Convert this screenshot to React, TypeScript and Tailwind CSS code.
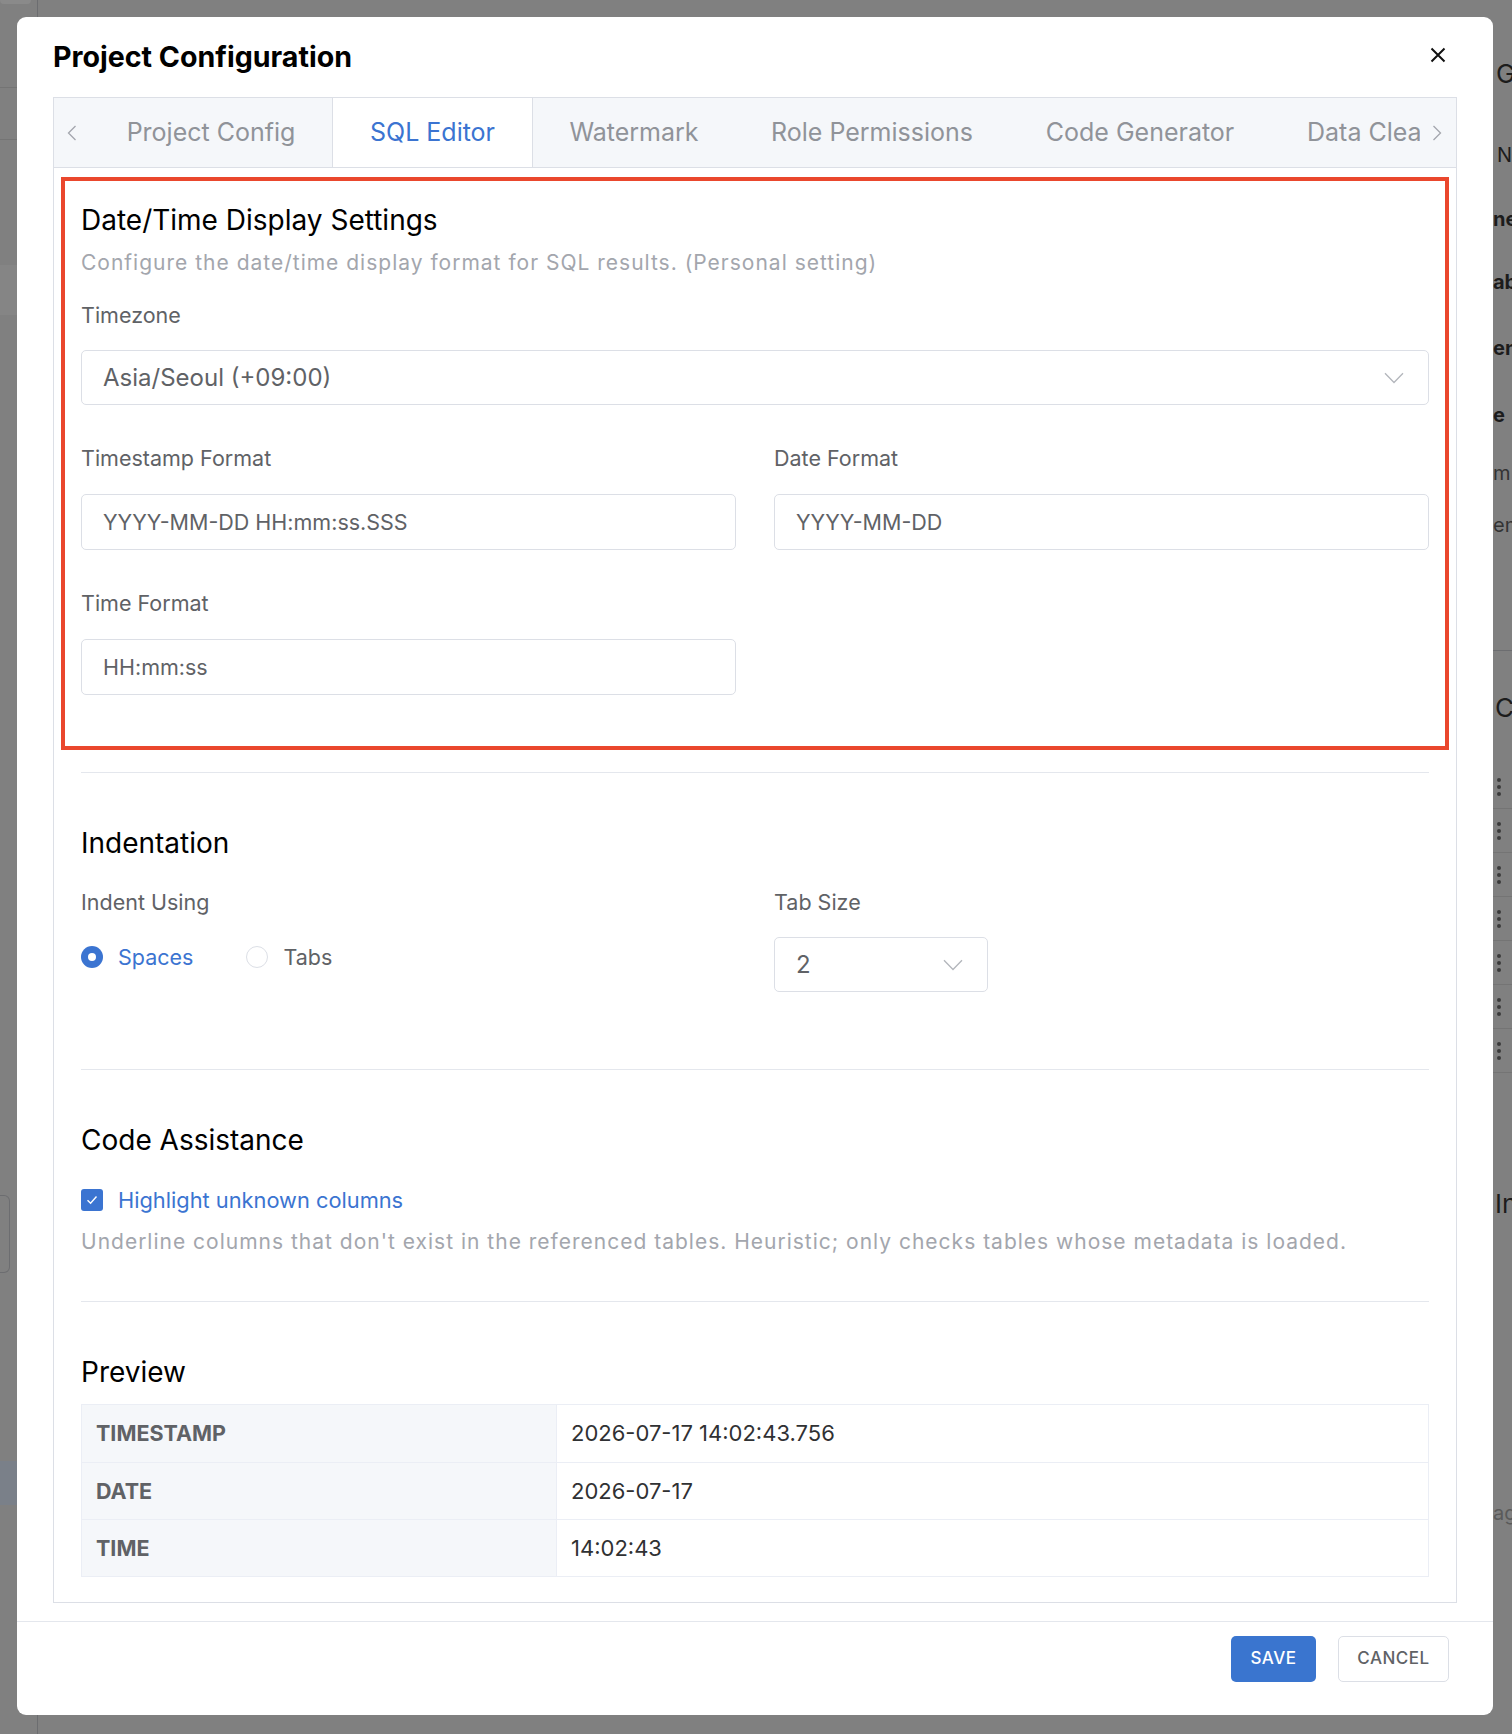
import React from "react";

function ChevronDown() {
  return (
    <svg width="20" height="12" viewBox="0 0 20 12" fill="none">
      <path d="M1 1.2 L10 10.5 L19 1.2" stroke="#b3b6bc" strokeWidth="1.3" />
    </svg>
  );
}

function ChevronLeft() {
  return (
    <svg width="10" height="16" viewBox="0 0 10 16" fill="none">
      <path d="M8.5 1 L1.5 8 L8.5 15" stroke="#a3a6ad" strokeWidth="1.3" />
    </svg>
  );
}

function ChevronRight() {
  return (
    <svg width="10" height="16" viewBox="0 0 10 16" fill="none">
      <path d="M1.5 1 L8.5 8 L1.5 15" stroke="#a3a6ad" strokeWidth="1.3" />
    </svg>
  );
}

function CloseIcon() {
  return (
    <svg width="16" height="16" viewBox="0 0 16 16" fill="none">
      <path d="M1.5 1.5 L14.5 14.5 M14.5 1.5 L1.5 14.5" stroke="#111" strokeWidth="2" />
    </svg>
  );
}

function Label({ children }: { children: React.ReactNode }) {
  return <div className="h-[28px] text-[21.5px] leading-[28px] text-[#606266]">{children}</div>;
}

function TextInput({ value }: { value: string }) {
  return (
    <div className="mt-[22px] flex h-[56px] items-center rounded-[5px] border border-[#dcdfe6] px-[21px] text-[21.5px] text-[#606266]">
      {value}
    </div>
  );
}

function SectionTitle({ children, className = "" }: { children: React.ReactNode; className?: string }) {
  return <h3 className={"h-[32px] text-[28px] leading-[32px] text-black " + className}>{children}</h3>;
}

function Backdrop() {
  return (
    <div className="flex h-full w-full">
      <div className="flex h-full w-[38px] flex-col border-r border-[#6c6d70]">
        <div className="h-[4px] w-[31px] rounded-b-[4px] bg-[#8a8a8a]" />
        <div className="mt-[83px] h-[53px] border-y border-[#747474]" />
        <div className="mt-[125px] h-[50px] bg-[#858585]" />
        <div className="mt-[880px] h-[78px] w-[10px] rounded-r-[6px] border border-l-0 border-[#6c6d70]" />
        <div className="mt-[188px] h-[44px] bg-[#7a8089]" />
      </div>
      <div className="h-full flex-1 bg-[radial-gradient(circle,#6a6a6a_1px,transparent_1.6px)] bg-[length:29.5px_29.5px] bg-[position:3px_12px]" />
      <div className="flex h-full w-[19px] flex-col overflow-hidden whitespace-nowrap text-[#1c1c1c]">
        <div className="h-[56px]" />
        <div className="flex h-[34px] items-center pl-[3px] text-[26px]">G</div>
        <div className="h-[50px]" />
        <div className="flex h-[30px] items-center pl-[4px] text-[20px]">N</div>
        <div className="h-[34px]" />
        <div className="flex h-[30px] items-center text-[20px] font-bold">ne</div>
        <div className="h-[33px]" />
        <div className="flex h-[30px] items-center text-[20px] font-bold">ab</div>
        <div className="h-[36px]" />
        <div className="flex h-[30px] items-center text-[20px] font-bold">en</div>
        <div className="h-[37px]" />
        <div className="flex h-[30px] items-center text-[20px] font-bold">e</div>
        <div className="h-[28px]" />
        <div className="flex h-[30px] items-center text-[20px] text-[#333]">m</div>
        <div className="h-[22px]" />
        <div className="flex h-[30px] items-center text-[20px] text-[#333]">em</div>
        <div className="h-[111px] border-b border-[#6c6d70]" />
        <div className="h-[38px]" />
        <div className="flex h-[36px] items-center pl-[2px] text-[26px]">C</div>
        <div className="h-[40px]" />
        {[0, 1, 2, 3, 4, 5, 6].map((i) => (
          <div key={i} className="flex h-[44px] flex-col items-start justify-center gap-[3px] border-b border-[#747474] pl-[4px]">
            <span className="h-[4px] w-[4px] rounded-full bg-[#3a3a3a]" />
            <span className="h-[4px] w-[4px] rounded-full bg-[#3a3a3a]" />
            <span className="h-[4px] w-[4px] rounded-full bg-[#3a3a3a]" />
          </div>
        ))}
        <div className="h-[114px]" />
        <div className="flex h-[32px] items-center pl-[2px] text-[26px]">In</div>
        <div className="h-[279px]" />
        <div className="flex h-[30px] items-center text-[20px] text-[#5a5a5a]">ag</div>
      </div>
    </div>
  );
}

const tabs = [
  { name: "Project Config", w: "w-[242px]" },
  { name: "SQL Editor", w: "w-[201px]", active: true },
  { name: "Watermark", w: "w-[202px]" },
  { name: "Role Permissions", w: "w-[274px]" },
  { name: "Code Generator", w: "w-[262px]" },
];

export default function App() {
  return (
    <div className="relative h-[1734px] w-full overflow-hidden bg-[#808080] font-['Inter',sans-serif]">
      <Backdrop />

      <div className="absolute left-[17px] top-[17px] flex h-[1698px] w-[1476px] flex-col rounded-[9px] bg-white">
        {/* header */}
        <div className="flex h-[80px] shrink-0 items-center justify-between pl-[36px] pr-[45px]">
          <h2 className="text-[28.6px] font-bold leading-[32px] text-black">Project Configuration</h2>
          <button className="-mt-[4px] flex h-[20px] w-[20px] items-center justify-center">
            <CloseIcon />
          </button>
        </div>

        {/* tabs card */}
        <div className="mx-[36px] flex h-[1506px] shrink-0 flex-col border border-[#dcdfe6]">
          <div className="flex h-[70px] shrink-0 border-b border-[#dcdfe6] bg-[#f5f7fa]">
            <div className="flex w-[36px] shrink-0 items-center justify-center">
              <ChevronLeft />
            </div>
            <div className="flex w-[1330px] shrink-0 overflow-hidden">
              {tabs.map((t) => (
                <div
                  key={t.name}
                  className={
                    "flex h-[70px] shrink-0 items-center justify-center whitespace-nowrap text-[25px] " +
                    t.w +
                    (t.active
                      ? " border-x border-[#dcdfe6] bg-white text-[#3b74d1]"
                      : " text-[#909399]")
                  }
                >
                  {t.name}
                </div>
              ))}
              <div className="flex h-[69px] w-[260px] shrink-0 items-center whitespace-nowrap pl-[36px] text-[25px] text-[#909399]">
                Data Cleaning
              </div>
            </div>
            <div className="flex flex-1 items-center justify-center pr-[2px]">
              <ChevronRight />
            </div>
          </div>

          {/* pane */}
          <div className="flex-1 px-[27px] pt-[9px]">
            <div className="-mx-[20px] border-[4px] border-[#ea472d] px-[16px] pt-[23px] pb-[51px]">
              <SectionTitle>Date/Time Display Settings</SectionTitle>
              <p className="mt-[13px] h-[28px] whitespace-nowrap text-[21px] leading-[28px] tracking-[1px] text-[#a3a6ad]">
                Configure the date/time display format for SQL results. (Personal setting)
              </p>
              <div className="mt-[24px]">
                <Label>Timezone</Label>
                <div className="mt-[21px] flex h-[55px] items-center justify-between rounded-[5px] border border-[#dcdfe6] pl-[21px] pr-[24px] text-[24px] text-[#606266]">
                  <span>Asia/Seoul (+09:00)</span>
                  <ChevronDown />
                </div>
              </div>
              <div className="mt-[39px] grid grid-cols-2 gap-x-[38px]">
                <div>
                  <Label>Timestamp Format</Label>
                  <TextInput value="YYYY-MM-DD HH:mm:ss.SSS" />
                </div>
                <div>
                  <Label>Date Format</Label>
                  <TextInput value="YYYY-MM-DD" />
                </div>
              </div>
              <div className="mt-[39px] grid grid-cols-2 gap-x-[38px]">
                <div>
                  <Label>Time Format</Label>
                  <TextInput value="HH:mm:ss" />
                </div>
              </div>
            </div>

            <div className="mt-[22px] h-px bg-[#e4e7ed]" />

            <SectionTitle className="mt-[54px]">Indentation</SectionTitle>
            <div className="mt-[29px] grid grid-cols-2 gap-x-[38px]">
              <div>
                <Label>Indent Using</Label>
                <div className="mt-[21px] flex h-[40px] items-center">
                  <div className="flex items-center">
                    <span className="flex h-[22px] w-[22px] items-center justify-center rounded-full bg-[#3b74d1]">
                      <span className="h-[8px] w-[8px] rounded-full bg-white" />
                    </span>
                    <span className="ml-[15px] text-[21.5px] text-[#3b74d1]">Spaces</span>
                  </div>
                  <div className="ml-[53px] flex items-center">
                    <span className="h-[22px] w-[22px] rounded-full border border-[#dcdfe6] bg-white" />
                    <span className="ml-[15px] text-[21.5px] text-[#606266]">Tabs</span>
                  </div>
                </div>
              </div>
              <div>
                <Label>Tab Size</Label>
                <div className="mt-[21px] flex h-[55px] w-[214px] items-center justify-between rounded-[5px] border border-[#dcdfe6] pl-[21px] pr-[24px] text-[24px] text-[#606266]">
                  <span>2</span>
                  <ChevronDown />
                </div>
              </div>
            </div>

            <div className="mt-[77px] h-px bg-[#e4e7ed]" />

            <SectionTitle className="mt-[54px]">Code Assistance</SectionTitle>
            <div className="mt-[30px] flex h-[28px] items-center">
              <span className="flex h-[22px] w-[22px] items-center justify-center rounded-[3px] bg-[#3b74d1]">
                <svg width="12" height="10" viewBox="0 0 12 10" fill="none">
                  <path d="M1.5 5.2 L4.6 8.3 L10.5 1.5" stroke="white" strokeWidth="1.4" />
                </svg>
              </span>
              <span className="ml-[15px] text-[21.8px] text-[#3b74d1]">Highlight unknown columns</span>
            </div>
            <p className="mt-[14px] h-[28px] whitespace-nowrap text-[21px] leading-[28px] tracking-[1px] text-[#a3a6ad]">
              Underline columns that don't exist in the referenced tables. Heuristic; only checks tables whose metadata is loaded.
            </p>

            <div className="mt-[45px] h-px bg-[#e4e7ed]" />

            <SectionTitle className="mt-[54px]">Preview</SectionTitle>
            <div className="mt-[16px] border border-[#ebeef5]">
              {[
                ["TIMESTAMP", "2026-07-17 14:02:43.756"],
                ["DATE", "2026-07-17"],
                ["TIME", "14:02:43"],
              ].map(([k, v], i) => (
                <div key={k} className={"flex h-[57px] " + (i > 0 ? "border-t border-[#ebeef5]" : "")}>
                  <div className="flex w-[475px] shrink-0 items-center border-r border-[#ebeef5] bg-[#f5f7fa] px-[14px] text-[21.5px] font-bold text-[#606266]">
                    {k}
                  </div>
                  <div className="flex flex-1 items-center px-[14px] text-[22px] text-[#303133]">{v}</div>
                </div>
              ))}
            </div>
          </div>
        </div>

        {/* footer */}
        <div className="mt-[18px] flex justify-end gap-[22px] border-t border-[#e4e7ed] pr-[44px] pt-[14px]">
          <button className="h-[46px] w-[85px] rounded-[5px] bg-[#3a75cf] text-[17px] font-medium tracking-[0.5px] text-white">
            SAVE
          </button>
          <button className="h-[46px] w-[111px] rounded-[5px] border border-[#dcdfe6] bg-white text-[17px] font-medium tracking-[0.5px] text-[#606266]">
            CANCEL
          </button>
        </div>
      </div>
    </div>
  );
}
